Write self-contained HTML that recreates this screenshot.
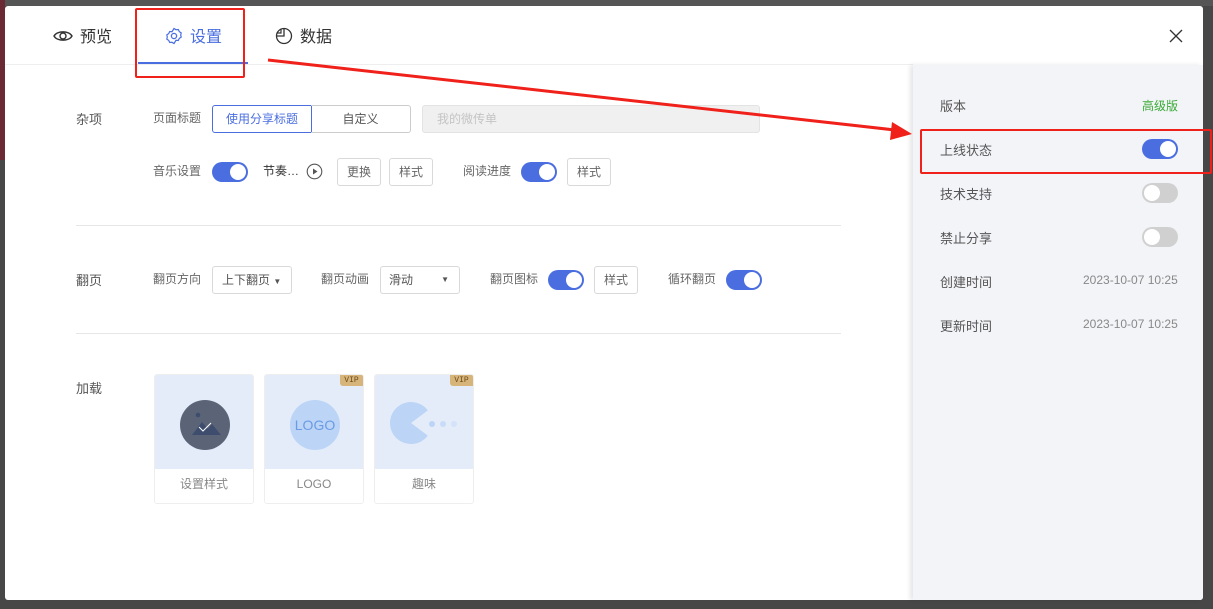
<!DOCTYPE html>
<html><head><meta charset="utf-8"><style>
*{margin:0;padding:0;box-sizing:border-box}
body{width:1213px;height:609px;background:#474747;position:relative;overflow:hidden;font-family:"Liberation Sans","Noto Sans CJK SC",sans-serif;font-size:13px;color:#555}
.a{position:absolute}
.modal{left:5px;top:6px;width:1198px;height:594px;background:#fff;border-radius:3px}
.t{position:absolute;white-space:nowrap;margin-top:-2px}
.t.s{margin-top:-1px}
.t.tab{margin-top:-3px}
.sw{position:absolute;width:36px;height:20px;border-radius:10px;background:#4a6ee0}
.sw::after{content:"";position:absolute;right:2px;top:2px;width:16px;height:16px;border-radius:50%;background:#fff}
.sw.off{background:#d0d0d0}
.sw.off::after{left:2px;right:auto}
.btn{position:absolute;height:28px;border:1px solid #d9d9d9;border-radius:3px;text-align:center;line-height:26px;font-size:12px;color:#666;background:#fff}
.lbl{font-size:12px;color:#666}
.card{position:absolute;top:374px;width:100px;height:130px;border:1px solid #eee;border-radius:3px;background:#fff;overflow:hidden}
.card .im{height:94px;background:#e3ecf8;position:relative}
.card .c{height:34px;line-height:30px;text-align:center;font-size:12px;color:#888}
.vip{position:absolute;right:0;top:0;width:23px;height:11px;background:#d7b57a;font-size:8px;line-height:11px;text-align:center;color:#6a4a1a;font-family:"Liberation Mono",monospace;border-bottom-left-radius:3px}
</style></head><body>
<div class="a" style="left:0;top:0;width:1213px;height:6px;background:#555"></div>
<div class="a" style="left:0;top:0;width:5px;height:160px;background:#6a2a35"></div>
<div class="a modal"></div>
<!-- header -->
<div class="a" style="left:5px;top:64px;width:908px;height:1px;background:#eee"></div>
<svg class="a" style="left:53px;top:27px" width="20" height="18" viewBox="0 0 20 18"><path d="M1 9C4 3.5 16 3.5 19 9C16 14.5 4 14.5 1 9Z" fill="none" stroke="#333" stroke-width="1.4"/><circle cx="10" cy="9" r="3" fill="none" stroke="#333" stroke-width="1.4"/></svg>
<div class="t tab" style="left:80px;top:26px;font-size:16px;color:#333">预览</div>
<svg class="a" style="left:165px;top:27px" width="18" height="18" viewBox="0 0 18 18"><circle cx="9" cy="9" r="2.6" fill="none" stroke="#4a6ee0" stroke-width="1.3"/><path d="M9 1.5l2 1.2 2.3-.2 1 2.1 1.9 1.3-.5 2.1.5 2.1-1.9 1.3-1 2.1-2.3-.2L9 16.5l-2-1.2-2.3.2-1-2.1-1.9-1.3.5-2.1-.5-2.1 1.9-1.3 1-2.1 2.3.2z" fill="none" stroke="#4a6ee0" stroke-width="1.2"/></svg>
<div class="t tab" style="left:190px;top:26px;font-size:16px;color:#4a6ee0">设置</div>
<div class="a" style="left:138px;top:62px;width:110px;height:2px;background:#4a6ee0"></div>
<svg class="a" style="left:275px;top:27px" width="18" height="18" viewBox="0 0 18 18"><circle cx="9" cy="9" r="7.5" fill="none" stroke="#333" stroke-width="1.3"/><path d="M9 1.5V9H1.5" fill="none" stroke="#333" stroke-width="1.3"/><path d="M6 1.5V6H1.5" fill="none" stroke="#333" stroke-width="1.2"/></svg>
<div class="t tab" style="left:300px;top:26px;font-size:16px;color:#333">数据</div>
<svg class="a" style="left:1169px;top:29px" width="14" height="14" viewBox="0 0 14 14"><path d="M1 1L13 13M13 1L1 13" stroke="#333" stroke-width="1.3"/></svg>
<!-- misc -->
<div class="t" style="left:76px;top:111px;font-size:13px;color:#555">杂项</div>
<div class="t s lbl" style="left:153px;top:110px">页面标题</div>
<div class="a" style="left:212px;top:105px;width:100px;height:28px;border:1px solid #4a6ee0;border-radius:3px 0 0 3px;text-align:center;line-height:26px;font-size:12px;color:#4a6ee0">使用分享标题</div>
<div class="a" style="left:311px;top:105px;width:100px;height:28px;border:1px solid #ccc;border-left:none;border-radius:0 3px 3px 0;text-align:center;line-height:26px;font-size:12px;color:#555">自定义</div>
<div class="a" style="left:422px;top:105px;width:338px;height:28px;background:#f0f0f0;border:1px solid #e3e3e3;border-radius:3px;line-height:26px;padding-left:14px;font-size:12px;color:#c4c4c4">我的微传单</div>
<div class="t s lbl" style="left:153px;top:163px">音乐设置</div>
<div class="sw" style="left:212px;top:162px"></div>
<div class="t s" style="left:263px;top:163px;font-size:12px;color:#333">节奏…</div>
<svg class="a" style="left:306px;top:163px" width="17" height="17" viewBox="0 0 17 17"><circle cx="8.5" cy="8.5" r="7.3" fill="none" stroke="#555" stroke-width="1.1"/><path d="M7 5.5v6l4.5-3z" fill="#555"/></svg>
<div class="btn" style="left:337px;top:158px;width:44px">更换</div>
<div class="btn" style="left:389px;top:158px;width:44px">样式</div>
<div class="t s lbl" style="left:463px;top:163px">阅读进度</div>
<div class="sw" style="left:521px;top:162px"></div>
<div class="btn" style="left:567px;top:158px;width:44px">样式</div>
<div class="a" style="left:76px;top:225px;width:765px;height:1px;background:#e6e6e6"></div>
<!-- page turn -->
<div class="t" style="left:76px;top:272px;font-size:13px;color:#555">翻页</div>
<div class="t s lbl" style="left:153px;top:271px">翻页方向</div>
<div class="btn" style="left:212px;top:266px;width:80px;text-align:left;padding-left:9px;color:#555">上下翻页 <span style="font-size:8px">▼</span></div>
<div class="t s lbl" style="left:321px;top:271px">翻页动画</div>
<div class="btn" style="left:380px;top:266px;width:80px;text-align:left;padding-left:8px;color:#555">滑动<span style="position:absolute;right:10px;font-size:8px">▼</span></div>
<div class="t s lbl" style="left:490px;top:271px">翻页图标</div>
<div class="sw" style="left:548px;top:270px"></div>
<div class="btn" style="left:594px;top:266px;width:44px">样式</div>
<div class="t s lbl" style="left:668px;top:271px">循环翻页</div>
<div class="sw" style="left:726px;top:270px"></div>
<div class="a" style="left:76px;top:333px;width:765px;height:1px;background:#e6e6e6"></div>
<!-- loading -->
<div class="t" style="left:76px;top:380px;font-size:13px;color:#555">加载</div>
<div class="card" style="left:154px"><div class="im"><svg class="a" style="left:25px;top:25px" width="50" height="50" viewBox="0 0 50 50"><circle cx="25" cy="25" r="25" fill="#5b6477"/><circle cx="18" cy="15" r="2.3" fill="#3e4d6e"/><path d="M12 35l10-13 6 7 4-5 9 11z" fill="#3e4d6e"/><path d="M19 27l4 4 8-8" stroke="#fff" stroke-width="1" fill="none"/></svg></div><div class="c">设置样式</div></div>
<div class="card" style="left:264px"><div class="im"><div class="vip">VIP</div><div class="a" style="left:25px;top:25px;width:50px;height:50px;border-radius:50%;background:#bcd4f6;text-align:center;line-height:50px;font-size:14px;color:#6a9be4">LOGO</div></div><div class="c">LOGO</div></div>
<div class="card" style="left:374px"><div class="im"><div class="vip">VIP</div><svg class="a" style="left:0;top:0" width="100" height="94" viewBox="0 0 100 94"><path d="M36 48L52.8 35.4A21 21 0 1 0 52.8 60.6Z" fill="#bcd4f6"/><circle cx="57" cy="49" r="3" fill="#bcd4f6"/><circle cx="68" cy="49" r="3" fill="#c8dcf8"/><circle cx="79" cy="49" r="3" fill="#d4e3f9"/></svg></div><div class="c">趣味</div></div>
<!-- right panel -->
<div class="a" style="left:913px;top:65px;width:290px;height:535px;background:#f3f4f8;box-shadow:-3px 0 5px rgba(0,0,0,.1);border-bottom-right-radius:3px"></div>
<div class="t" style="left:940px;top:98px;color:#555">版本</div>
<div class="t s" style="left:1142px;top:98px;font-size:12px;color:#3aaa35">高级版</div>
<div class="t" style="left:940px;top:142px;color:#555">上线状态</div>
<div class="sw" style="left:1142px;top:139px"></div>
<div class="t" style="left:940px;top:186px;color:#555">技术支持</div>
<div class="sw off" style="left:1142px;top:183px"></div>
<div class="t" style="left:940px;top:230px;color:#555">禁止分享</div>
<div class="sw off" style="left:1142px;top:227px"></div>
<div class="t" style="left:940px;top:274px;color:#555">创建时间</div>
<div class="t s" style="left:1083px;top:274px;font-size:12px;color:#888">2023-10-07 10:25</div>
<div class="t" style="left:940px;top:318px;color:#555">更新时间</div>
<div class="t s" style="left:1083px;top:318px;font-size:12px;color:#888">2023-10-07 10:25</div>
<!-- annotations -->
<div class="a" style="left:135px;top:8px;width:110px;height:70px;border:2px solid #f0201a;border-radius:2px"></div>
<div class="a" style="left:920px;top:129px;width:292px;height:45px;border:2px solid #f0201a;border-radius:2px"></div>
<svg class="a" style="left:0;top:0" width="1213" height="609"><path d="M268 60L895 130" stroke="#f0201a" stroke-width="3"/><path d="M912 134L892 122L890 140Z" fill="#f0201a"/></svg>
</body></html>
